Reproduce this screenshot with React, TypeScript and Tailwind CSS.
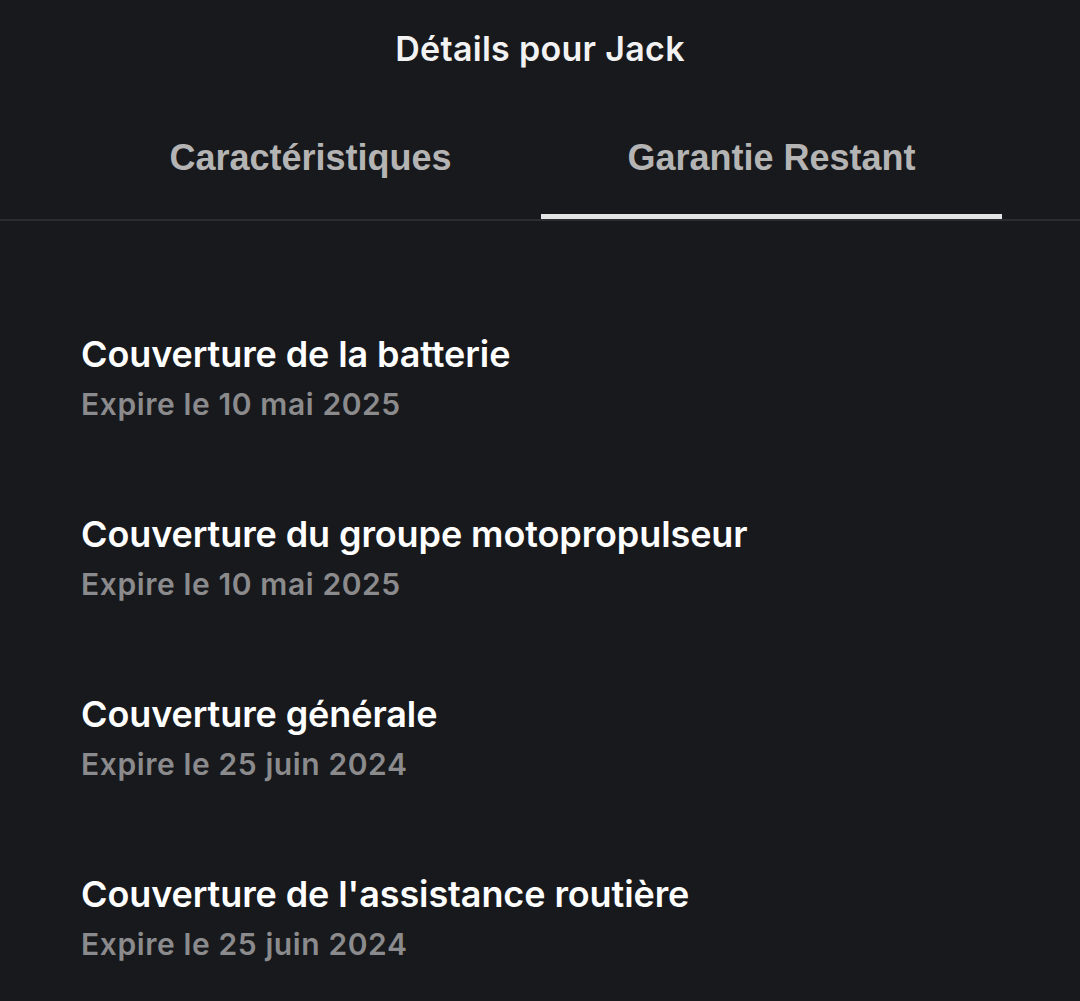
import React, {useState} from 'react';

type Coverage = {
    title: string;
    expires: string;
};

const coverages: Coverage[] = [
    {title: 'Couverture de la batterie', expires: 'Expire le 10 mai 2025'},
    {title: 'Couverture du groupe motopropulseur', expires: 'Expire le 10 mai 2025'},
    {title: 'Couverture générale', expires: 'Expire le 25 juin 2024'},
    {title: "Couverture de l'assistance routière", expires: 'Expire le 25 juin 2024'},
];

const tabs = ['Caractéristiques', 'Garantie Restant'];

const App: React.FC = () => {
    const [activeTab, setActiveTab] = useState(1);

    return (
        <div className="min-h-screen w-full bg-[#18191c] text-white font-['Inter','Noto_Sans',sans-serif]">
            {/* En-tête */}
            <div className="pt-[29px] text-center">
                <h1 className="text-[34px] leading-[40px] font-semibold text-[#f2f2f2] tracking-[0.3px]">
                    Détails pour Jack
                </h1>
            </div>

            {/* Onglets */}
            <div className="mt-[69px] border-b-2 border-[#2c2d31]">
                <div className="flex pl-[80px] pr-[78px]">
                    {tabs.map((tab, i) => (
                        <button
                            key={tab}
                            onClick={() => setActiveTab(i)}
                            className="flex-1 flex flex-col items-center"
                        >
                            <span
                                className="text-[36px] leading-[40px] font-bold text-[#b4b4b4] font-['Liberation_Sans',sans-serif]">
                                {tab}
                            </span>
                            <span
                                className={`mt-[36px] h-[5px] w-full ${activeTab === i ? 'bg-[#e4e4e4]' : 'bg-transparent'}`}
                            />
                        </button>
                    ))}
                </div>
            </div>

            {/* Liste des garanties */}
            <div className="px-[81px] pt-[111px] flex flex-col gap-[90px]">
                {coverages.map(c => (
                    <div key={c.title}>
                        <h3 className="text-[36px] leading-[44px] font-semibold text-white tracking-[-0.1px]">{c.title}</h3>
                        <p className="mt-[10px] text-[30px] leading-[36px] font-semibold text-[#8b8b8d] tracking-[0.6px]">{c.expires}</p>
                    </div>
                ))}
            </div>
        </div>
    );
};

export default App;
